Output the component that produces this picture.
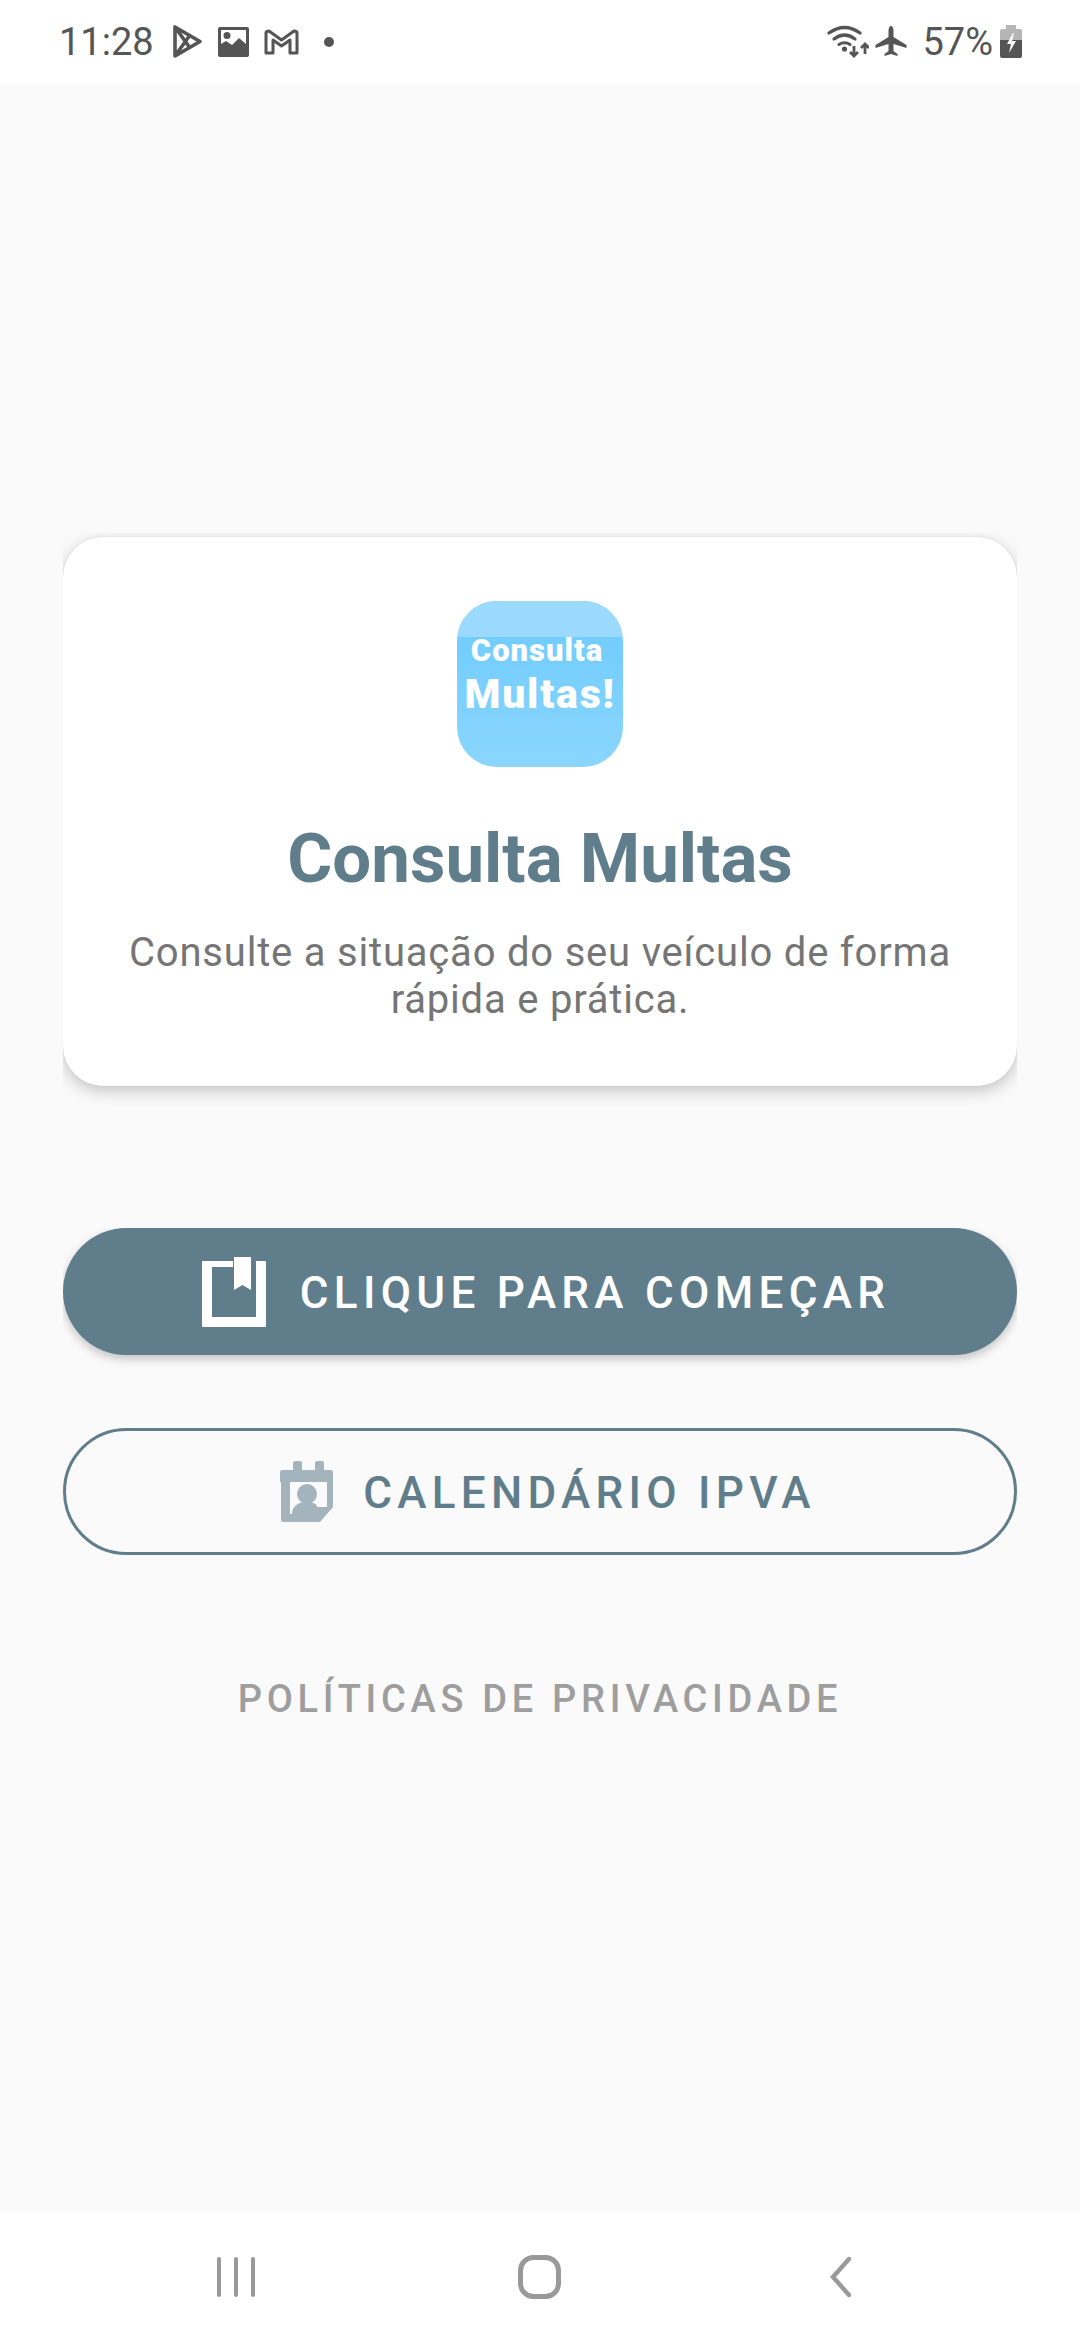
<div class="screen">
  <header class="status">
    <div class="left">
      <span class="time">11:28</span>
      <svg viewBox="0 0 31 35" width="31" height="35"><path d="M3 3 L3 32 L28 17.500 Z M3 3 L18 24 M3 32 L18 11" fill="none" stroke="#555" stroke-width="3.600" stroke-linejoin="round"/></svg>
      <svg class="pic" viewBox="0 0 31 30" width="31" height="30"><path fill-rule="evenodd" d="M2 0h27a2 2 0 0 1 2 2v26a2 2 0 0 1-2 2H2a2 2 0 0 1-2-2V2a2 2 0 0 1 2-2zM3 3v14l5-3 6 4 7-7 7 6V3zM9 5a3.500 3.500 0 1 1 0 7 3.500 3.500 0 0 1 0-7z" fill="#555"/></svg>
      <svg class="gm" viewBox="0 0 35 26" width="35" height="26"><path d="M2 4 V24 H9 V11 L17.500 17 L26 11 V24 H33 V4 Q33 2 30 2 L17.500 11 L5 2 Q2 2 2 4 Z" fill="none" stroke="#555" stroke-width="3" stroke-linejoin="round"/></svg>
      <span class="dot"></span>
    </div>
    <div class="right">
      <svg viewBox="0 0 42 33" width="42" height="33"><g fill="none" stroke="#555" stroke-width="3.200" stroke-linecap="round"><path d="M2 8 Q17.500 -3 33 8"/><path d="M7 14 Q17.500 6 28 14"/><path d="M12 19.500 Q17.500 16 23 19.500"/></g><circle cx="17.500" cy="24" r="2.600" fill="#555"/><path d="M27 21v10m-4-4 4 4 4-4M38 29V19m-4 4 4-4 4 4" fill="none" stroke="#555" stroke-width="2.800"/></svg>
      <svg class="plane" viewBox="0 0 32 32" width="32" height="32"><path d="M16 0c1.500 0 2.500 2 2.500 5v6l13 8v3l-13-4v7l4 3v2l-6.500-2-6.500 2v-2l4-3v-7L.500 22v-3l13-8V5c0-3 1-5 2.500-5z" fill="#555"/></svg>
      <span class="pct">57%</span>
      <svg viewBox="0 0 22 33" width="22" height="33"><path d="M6 0h10v4h4a2 2 0 0 1 2 2v12H0V6a2 2 0 0 1 2-2h4z" fill="#b5b5b5"/><path d="M0 15h22v16a2 2 0 0 1-2 2H2a2 2 0 0 1-2-2z" fill="#555"/><path d="M13 8 7 19h4l-2 9 7-12h-4l2-8z" fill="#fff"/></svg>
    </div>
  </header>

  <main class="content">
    <section class="card">
      <div class="logo">
        <div class="logo-top"></div>
        <span class="logo-a">Consulta</span>
        <span class="logo-b">Multas!</span>
      </div>
      <h1>Consulta Multas</h1>
      <p>Consulte a situação do seu veículo de forma rápida e prática.</p>
    </section>

    <button class="btn primary">
      <svg viewBox="0 0 64 70" width="64" height="70"><path fill-rule="evenodd" d="M1 4h30v6H10v50h44V4h9a1 1 0 0 1 1 1v64a1 1 0 0 1-1 1H1a1 1 0 0 1-1-1V5a1 1 0 0 1 1-1z" fill="#fff"/><path d="M32 0h17v33l-8.500-5-8.500 5z" fill="#fff"/></svg>
      <span>CLIQUE PARA COMEÇAR</span>
    </button>

    <button class="btn outline">
      <svg viewBox="0 0 53 61" width="53" height="61"><path fill-rule="evenodd" d="M13 2a2 2 0 0 1 2-2h5a2 2 0 0 1 2 2v7h13V2a2 2 0 0 1 2-2h5a2 2 0 0 1 2 2v7h7a2 2 0 0 1 2 2v35L40 61H3a2 2 0 0 1-2-2V21H0V11a2 2 0 0 1 2-2h11zM10 21v32h27v-7h10V21z" fill="#a4b4bd"/><circle cx="27" cy="33" r="10" fill="#a4b4bd"/><path d="M12 53c0-7 5-11 12-12h6c4 1 7 2 7 5v7z" fill="#a4b4bd"/></svg>
      <span>CALENDÁRIO IPVA</span>
    </button>

    <div class="policy">POLÍTICAS DE PRIVACIDADE</div>
  </main>

  <nav class="navbar">
    <svg viewBox="0 0 40 40" width="40" height="40"><path d="M3 2v36M20 2v36M37 2v36" stroke="#999" stroke-width="4" stroke-linecap="round"/></svg>
    <svg class="home" viewBox="0 0 43 44" width="43" height="44"><rect x="2.500" y="2.500" width="38" height="39" rx="13" fill="none" stroke="#999" stroke-width="5"/></svg>
    <svg class="back" viewBox="0 0 24 42" width="24" height="42"><path d="M20 3 4 21l16 18" fill="none" stroke="#999" stroke-width="4.400" stroke-linecap="round"/></svg>
  </nav>
</div>

<style>
  :global(body) {
    margin: 0;
    background: #fafafa;
  }

  .screen {
    width: 1080px;
    height: 2340px;
    display: flex;
    flex-direction: column;
    font-family: Roboto, "Noto Sans", sans-serif;
    background: #fafafa;
  }

  .status {
    height: 83px;
    background: #fff;
    display: flex;
    justify-content: space-between;
    align-items: center;
    padding: 0 58px 0 59px;
    color: #555;
    flex: none;
  }

  .left, .right {
    display: flex;
    align-items: center;
  }

  .time {
    font-size: 38px;
    margin-right: 18px;
  }

  .pic { margin-left: 15px; }
  .gm { margin-left: 15px; }

  .dot {
    width: 10px;
    height: 10px;
    border-radius: 50%;
    background: #555;
    margin-left: 25px;
  }

  .plane { margin-left: 6px; }

  .pct {
    font-size: 38px;
    margin-left: 15px;
    margin-right: 7px;
  }

  .content {
    flex: 1;
    padding: 454px 63px 0;
    display: flex;
    flex-direction: column;
  }

  .card {
    height: 549px;
    box-sizing: border-box;
    background: #fff;
    border-radius: 40px;
    box-shadow: 0 5px 16px rgba(0, 0, 0, 0.22), 0 0 2px rgba(0, 0, 0, 0.1);
    clip-path: inset(-4px 0 -40px 0);
    padding: 64px 40px 0;
    display: flex;
    flex-direction: column;
    align-items: center;
    text-align: center;
  }

  .logo {
    width: 166px;
    height: 166px;
    border-radius: 40px;
    background: linear-gradient(#6ccafd, #8ad6fd);
    position: relative;
    overflow: hidden;
    color: #fff;
    font-weight: 900;
    text-align: center;
    display: flex;
    flex-direction: column;
    align-items: center;
    flex: none;
  }

  .logo-top {
    position: absolute;
    top: 0;
    left: 0;
    right: 0;
    height: 36px;
    background: #9bd9ff;
  }

  .logo-a {
    position: relative;
    font-size: 31px;
    letter-spacing: 1px;
    line-height: 36px;
    margin-top: 32px;
    margin-left: -6px;
  }

  .logo-b {
    position: relative;
    font-size: 41px;
    letter-spacing: 1.800px;
    line-height: 46px;
    margin-top: 2px;
    white-space: nowrap;
  }

  h1 {
    margin: 53px 0 0;
    font-size: 69px;
    line-height: 78px;
    font-weight: 700;
    color: #607d8b;
  }

  p {
    margin: 31px 0 0;
    font-size: 40px;
    line-height: 47px;
    letter-spacing: 0.8px;
    color: #757575;
  }

  .btn {
    height: 127px;
    border-radius: 64px;
    font-family: inherit;
    font-size: 44px;
    font-weight: 500;
    letter-spacing: 5.300px;
    display: flex;
    align-items: center;
    justify-content: center;
    gap: 34px;
    padding: 0;
    flex: none;
    box-sizing: border-box;
  }

  .btn span {
    padding-top: 3px;
  }

  .primary {
    margin-top: 142px;
    padding-left: 12px;
    background: #607d8b;
    color: #fff;
    border: none;
    box-shadow: 0 4px 10px rgba(0, 0, 0, 0.22);
    clip-path: inset(0 0 -30px 0);
  }

  .outline {
    margin-top: 73px;
    padding-left: 16px;
    background: transparent;
    color: #607d8b;
    border: 3px solid #607d8b;
    gap: 30px;
  }

  .policy {
    margin-top: 122px;
    text-align: center;
    font-size: 38px;
    line-height: 44px;
    font-weight: 500;
    letter-spacing: 4.700px;
    color: #9e9e9e;
  }

  .navbar {
    height: 127px;
    flex: none;
    background: #fff;
    display: flex;
    align-items: center;
    padding-left: 216px;
  }

  .home { margin-left: 262px; }
  .back { margin-left: 268px; }
</style>
